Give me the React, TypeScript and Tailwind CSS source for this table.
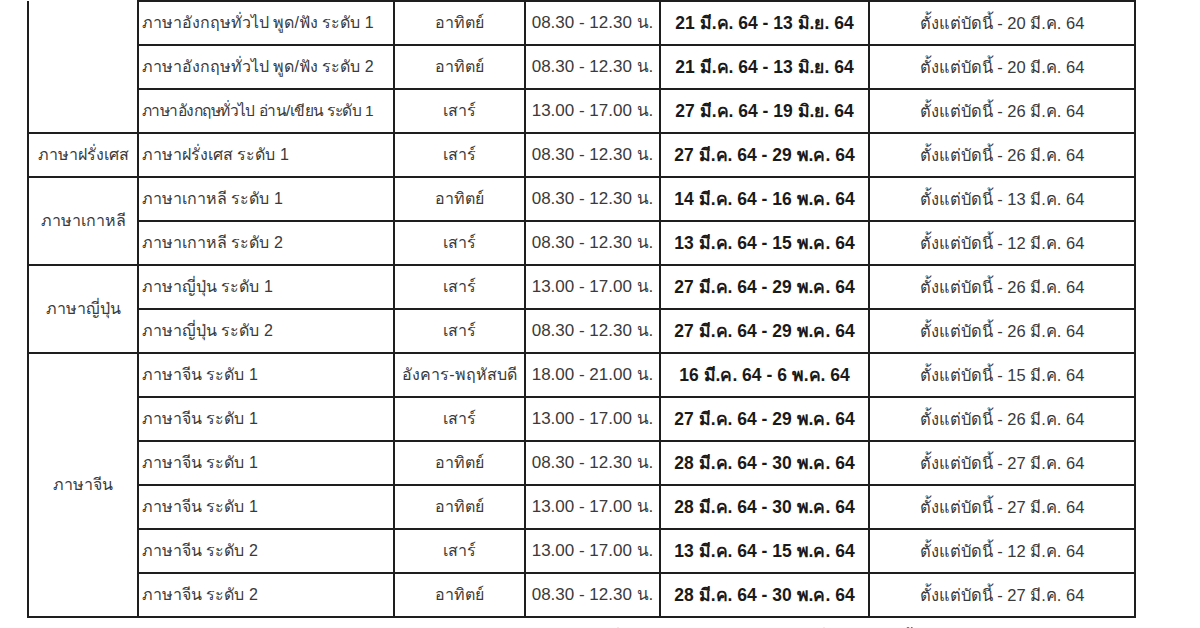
type Row = {
  group?: { name: string; span: number; open?: boolean }
  course: string
  tight?: boolean
  day: string
  time: string
  period: string
  apply: string
}

const rows: Row[] = [
  { group: { name: '', span: 3, open: true }, course: 'ภาษาอังกฤษทั่วไป พูด/ฟัง ระดับ 1', day: 'อาทิตย์', time: '08.30 - 12.30 น.', period: '21 มี.ค. 64 - 13 มิ.ย. 64', apply: 'ตั้งแต่บัดนี้ - 20 มี.ค. 64' },
  { course: 'ภาษาอังกฤษทั่วไป พูด/ฟัง ระดับ 2', day: 'อาทิตย์', time: '08.30 - 12.30 น.', period: '21 มี.ค. 64 - 13 มิ.ย. 64', apply: 'ตั้งแต่บัดนี้ - 20 มี.ค. 64' },
  { course: 'ภาษาอังกฤษทั่วไป อ่าน/เขียน ระดับ 1', tight: true, day: 'เสาร์', time: '13.00 - 17.00 น.', period: '27 มี.ค. 64 - 19 มิ.ย. 64', apply: 'ตั้งแต่บัดนี้ - 26 มี.ค. 64' },
  { group: { name: 'ภาษาฝรั่งเศส', span: 1 }, course: 'ภาษาฝรั่งเศส ระดับ 1', day: 'เสาร์', time: '08.30 - 12.30 น.', period: '27 มี.ค. 64 - 29 พ.ค. 64', apply: 'ตั้งแต่บัดนี้ - 26 มี.ค. 64' },
  { group: { name: 'ภาษาเกาหลี', span: 2 }, course: 'ภาษาเกาหลี ระดับ 1', day: 'อาทิตย์', time: '08.30 - 12.30 น.', period: '14 มี.ค. 64 - 16 พ.ค. 64', apply: 'ตั้งแต่บัดนี้ - 13 มี.ค. 64' },
  { course: 'ภาษาเกาหลี ระดับ 2', day: 'เสาร์', time: '08.30 - 12.30 น.', period: '13 มี.ค. 64 - 15 พ.ค. 64', apply: 'ตั้งแต่บัดนี้ - 12 มี.ค. 64' },
  { group: { name: 'ภาษาญี่ปุ่น', span: 2 }, course: 'ภาษาญี่ปุ่น ระดับ 1', day: 'เสาร์', time: '13.00 - 17.00 น.', period: '27 มี.ค. 64 - 29 พ.ค. 64', apply: 'ตั้งแต่บัดนี้ - 26 มี.ค. 64' },
  { course: 'ภาษาญี่ปุ่น ระดับ 2', day: 'เสาร์', time: '08.30 - 12.30 น.', period: '27 มี.ค. 64 - 29 พ.ค. 64', apply: 'ตั้งแต่บัดนี้ - 26 มี.ค. 64' },
  { group: { name: 'ภาษาจีน', span: 6 }, course: 'ภาษาจีน ระดับ 1', day: 'อังคาร-พฤหัสบดี', time: '18.00 - 21.00 น.', period: '16 มี.ค. 64 - 6 พ.ค. 64', apply: 'ตั้งแต่บัดนี้ - 15 มี.ค. 64' },
  { course: 'ภาษาจีน ระดับ 1', day: 'เสาร์', time: '13.00 - 17.00 น.', period: '27 มี.ค. 64 - 29 พ.ค. 64', apply: 'ตั้งแต่บัดนี้ - 26 มี.ค. 64' },
  { course: 'ภาษาจีน ระดับ 1', day: 'อาทิตย์', time: '08.30 - 12.30 น.', period: '28 มี.ค. 64 - 30 พ.ค. 64', apply: 'ตั้งแต่บัดนี้ - 27 มี.ค. 64' },
  { course: 'ภาษาจีน ระดับ 1', day: 'อาทิตย์', time: '13.00 - 17.00 น.', period: '28 มี.ค. 64 - 30 พ.ค. 64', apply: 'ตั้งแต่บัดนี้ - 27 มี.ค. 64' },
  { course: 'ภาษาจีน ระดับ 2', day: 'เสาร์', time: '13.00 - 17.00 น.', period: '13 มี.ค. 64 - 15 พ.ค. 64', apply: 'ตั้งแต่บัดนี้ - 12 มี.ค. 64' },
  { course: 'ภาษาจีน ระดับ 2', day: 'อาทิตย์', time: '08.30 - 12.30 น.', period: '28 มี.ค. 64 - 30 พ.ค. 64', apply: 'ตั้งแต่บัดนี้ - 27 มี.ค. 64' },
]

const cell = 'h-[44px] border-2 border-[#1e1e1e] p-0 align-middle'

export default function App() {
  return (
    <div
      className="h-[628px] w-[1200px] overflow-hidden bg-white text-[16px] text-[#3a3a3a]"
      style={{ fontFamily: '"Liberation Sans", "Noto Sans", sans-serif' }}
    >
      <table className="ml-[27px] w-[1107px] table-fixed border-collapse">
        <colgroup>
          <col className="w-[110px]" />
          <col className="w-[256px]" />
          <col className="w-[131px]" />
          <col className="w-[135px]" />
          <col className="w-[209px]" />
          <col className="w-[266px]" />
        </colgroup>
        <tbody>
          {rows.map((r, i) => (
            <tr key={i}>
              {r.group && (
                <td
                  rowSpan={r.group.span}
                  className={`${cell} text-center ${r.group.open ? 'border-t-0' : ''}`}
                >
                  {r.group.name}
                </td>
              )}
              <td
                className={`${cell} whitespace-nowrap pl-[3px] text-left ${r.tight ? 'text-[15.5px] tracking-[-0.035em]' : ''}`}
              >
                {r.course}
              </td>
              <td className={`${cell} whitespace-nowrap text-center`}>{r.day}</td>
              <td className={`${cell} whitespace-nowrap text-center text-[17px]`}>{r.time}</td>
              <td className={`${cell} whitespace-nowrap text-center text-[17.5px] font-bold text-[#1a1a1a]`}>
                {r.period}
              </td>
              <td className={`${cell} whitespace-nowrap text-center text-[16.5px]`}>{r.apply}</td>
            </tr>
          ))}
        </tbody>
      </table>
      <p className="ml-[530px] mt-[9px] whitespace-nowrap text-[16px] leading-[24px]">
        หมายเหตุ ผู้ที่สนใจสามารถติดต่อสมัครได้ที่ศูนย์ภาษา ชั้น 1 อาคารเรียนรวม ในวันและเวลาราชการ
      </p>
    </div>
  )
}
